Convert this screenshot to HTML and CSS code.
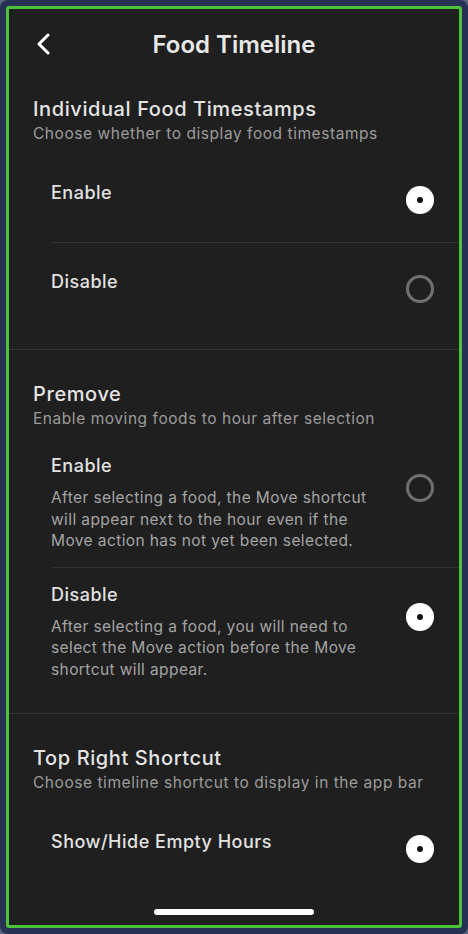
FILE: index.html
```html
<!DOCTYPE html>
<html lang="en">
<head>
  <meta charset="UTF-8" />
  <meta name="viewport" content="width=device-width, initial-scale=1.0" />
  <title>Food Timeline</title>
  <link rel="stylesheet" href="styles.css">
</head>
<body>

  <div class="device">
    <div class="screen">

      <div class="header">
        <div class="back">
          <svg width="14" height="22" viewBox="0 0 14 22">
            <polyline points="12,2 3,11 12,20" fill="none" stroke="#fff" stroke-width="3" stroke-linecap="round" stroke-linejoin="round" />
          </svg>
        </div>
        <div class="title">Food Timeline</div>
        <div></div>
      </div>

      <div class="content">

        <div class="section">
          <div class="section-title">Individual Food Timestamps</div>
          <div class="section-sub">Choose whether to display food timestamps</div>
          <div class="options">
            <div class="opt">
              <div class="opt-text">
                <div class="opt-label">Enable</div>
              </div>
              <span class="radio on"></span>
            </div>
            <div class="opt">
              <div class="opt-text">
                <div class="opt-label">Disable</div>
              </div>
              <span class="radio"></span>
            </div>
          </div>
        </div>

        <div class="section">
          <div class="section-title">Premove</div>
          <div class="section-sub">Enable moving foods to hour after selection</div>
          <div class="options">
            <div class="opt has-desc">
              <div class="opt-text">
                <div class="opt-label">Enable</div>
                <div class="opt-desc">After selecting a food, the Move shortcut will appear next to the hour even if the Move action has not yet been selected.</div>
              </div>
              <span class="radio"></span>
            </div>
            <div class="opt has-desc">
              <div class="opt-text">
                <div class="opt-label">Disable</div>
                <div class="opt-desc">After selecting a food, you will need to select the Move action before the Move shortcut will appear.</div>
              </div>
              <span class="radio on"></span>
            </div>
          </div>
        </div>

        <div class="section">
          <div class="section-title">Top Right Shortcut</div>
          <div class="section-sub">Choose timeline shortcut to display in the app bar</div>
          <div class="options">
            <div class="opt">
              <div class="opt-text">
                <div class="opt-label">Show/Hide Empty Hours</div>
              </div>
              <span class="radio on"></span>
            </div>
          </div>
        </div>

      </div>

      <div class="home-bar"></div>

    </div>
  </div>

</body>
</html>
```

FILE: styles.css
```css
body {
  margin: 0;
  background-color: #5a6380;
  font-family: 'Inter', 'Noto Sans', sans-serif;
}

.device {
  box-sizing: border-box;
  height: 934px;
  padding: 6px;
  background-color: #263154;
  border-radius: 8px;
}

.screen {
  box-sizing: border-box;
  height: 100%;
  border: 3px solid #4cc13a;
  border-radius: 3px;
  background-color: #1f1f1f;
  display: flex;
  flex-direction: column;
  overflow: hidden;
}

.header {
  flex: none;
  height: 70px;
  display: grid;
  grid-template-columns: 1fr auto 1fr;
  align-items: center;
}

.back {
  padding-left: 27px;
  display: flex;
  align-items: center;
}

.title {
  color: #e8e8e8;
  font-size: 24px;
  font-weight: 600;
}

.content {
  flex: 1;
  min-height: 0;
}

.section {
  padding: 31px 0 18px;
  border-bottom: 1px solid #343434;
}

.section:first-child {
  padding-top: 17px;
}

.section:last-child {
  border-bottom: none;
}

.section-title {
  padding: 0 24px;
  color: #e4e4e4;
  font-size: 20px;
  line-height: 26px;
  font-weight: 500;
  letter-spacing: 0.6px;
}

.section-sub {
  padding: 0 24px;
  margin-top: 2px;
  color: #9c9c9c;
  font-size: 15.5px;
  line-height: 20px;
  letter-spacing: 0.55px;
}

.options {
  margin-top: 10px;
}

.opt {
  display: flex;
  align-items: flex-start;
  gap: 20px;
  margin-left: 42px;
  padding: 27px 25px 28px 0;
  border-bottom: 1px solid #333;
}

.opt:last-child {
  border-bottom: none;
}

.opt.has-desc {
  padding-top: 15px;
  padding-bottom: 15px;
}

.opt-text {
  flex: 1;
}

.opt-label {
  color: #e2e2e2;
  font-size: 18px;
  line-height: 24px;
  font-weight: 500;
  letter-spacing: 0.5px;
}

.opt-desc {
  margin-top: 9px;
  color: #a4a4a4;
  font-size: 15.5px;
  line-height: 21.5px;
  letter-spacing: 0.4px;
}

.radio {
  box-sizing: border-box;
  flex: none;
  width: 28px;
  height: 28px;
  margin-top: 5px;
  border: 3px solid #707070;
  border-radius: 50%;
  display: flex;
  align-items: center;
  justify-content: center;
}

.has-desc .radio {
  margin-top: 20px;
}

.radio.on {
  border: none;
  background-color: #fff;
}

.radio.on::after {
  content: "";
  width: 6px;
  height: 6px;
  border-radius: 50%;
  background-color: #111;
}

.home-bar {
  flex: none;
  width: 160px;
  height: 6px;
  margin: 0 auto 10px;
  border-radius: 3px;
  background-color: #fff;
}
```
